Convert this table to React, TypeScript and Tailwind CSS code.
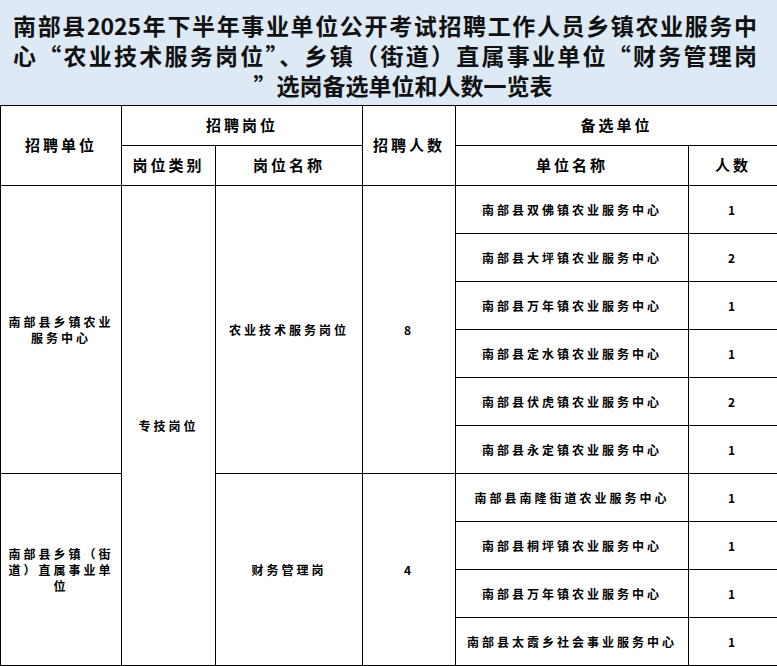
import React from "react";

const font = { fontFamily: '"Noto Sans CJK SC", "Noto Sans", sans-serif' };

const units: [string, string][] = [
  ["南部县双佛镇农业服务中心", "1"],
  ["南部县大坪镇农业服务中心", "2"],
  ["南部县万年镇农业服务中心", "1"],
  ["南部县定水镇农业服务中心", "1"],
  ["南部县伏虎镇农业服务中心", "2"],
  ["南部县永定镇农业服务中心", "1"],
  ["南部县南隆街道农业服务中心", "1"],
  ["南部县桐坪镇农业服务中心", "1"],
  ["南部县万年镇农业服务中心", "1"],
  ["南部县太霞乡社会事业服务中心", "1"],
];

const th = "border border-black text-center align-middle text-[15px] font-bold tracking-[3px] text-black p-0";
const td = "border border-black text-center align-middle text-[12px] font-bold tracking-[3px] text-black leading-[16px] px-[3px] py-0";

export default function App() {
  return (
    <div className="w-[777px] bg-white" style={font}>
      <div className="h-[105px] bg-[#dde9f5] pt-[10px] pl-[13px] pr-[20px] text-[23px] font-bold leading-[30px] text-[#111]">
        <div className="h-[30px] whitespace-nowrap text-justify [text-align-last:justify]">
          南部县2025年下半年事业单位公开考试招聘工作人员乡镇农业服务中
        </div>
        <div className="h-[30px] whitespace-nowrap text-justify [text-align-last:justify]">
          心“农业技术服务岗位”、乡镇（街道）直属事业单位“财务管理岗
        </div>
        <div className="h-[30px] whitespace-nowrap pl-[36px] text-center">”选岗备选单位和人数一览表</div>
      </div>
      <table className="w-[777px] table-fixed border-collapse">
        <colgroup>
          <col className="w-[121px]" />
          <col className="w-[94px]" />
          <col className="w-[147px]" />
          <col className="w-[93px]" />
          <col className="w-[233px]" />
          <col className="w-[89px]" />
        </colgroup>
        <thead>
          <tr className="h-[40px]">
            <th rowSpan={2} className={th}>招聘单位</th>
            <th colSpan={2} className={th}>招聘岗位</th>
            <th rowSpan={2} className={th}>招聘人数</th>
            <th colSpan={2} className={th}>备选单位</th>
          </tr>
          <tr className="h-[40px]">
            <th className={th}>岗位类别</th>
            <th className={th}>岗位名称</th>
            <th className={th}>单位名称</th>
            <th className={th}>人数</th>
          </tr>
        </thead>
        <tbody>
          {units.map(([name, n], i) => (
            <tr key={i} className="h-[48px]">
              {i === 0 && (
                <>
                  <td rowSpan={6} className={td}>南部县乡镇农业服务中心</td>
                  <td rowSpan={10} className={td}>专技岗位</td>
                  <td rowSpan={6} className={td}>农业技术服务岗位</td>
                  <td rowSpan={6} className={td}>8</td>
                </>
              )}
              {i === 6 && (
                <>
                  <td rowSpan={4} className={td}>南部县乡镇（街道）直属事业单位</td>
                  <td rowSpan={4} className={td}>财务管理岗</td>
                  <td rowSpan={4} className={td}>4</td>
                </>
              )}
              <td className={td}>{name}</td>
              <td className={td}>{n}</td>
            </tr>
          ))}
        </tbody>
      </table>
    </div>
  );
}
